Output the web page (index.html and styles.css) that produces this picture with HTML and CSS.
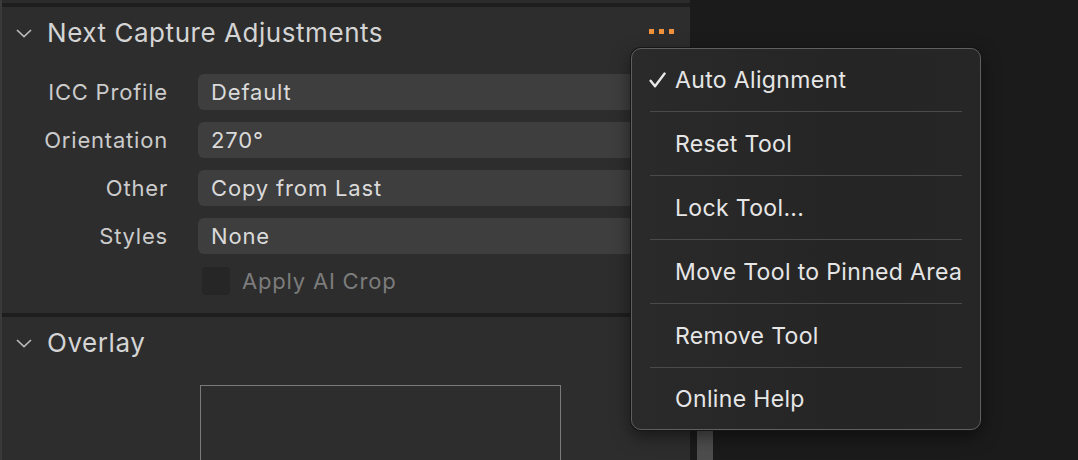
FILE: index.html
```html
<!DOCTYPE html>
<html>
<head>
<meta charset="utf-8">
<link rel="stylesheet" href="styles.css">
</head>
<body>
<div class="app">
  <div class="panel">
    <div class="topstrip"></div>
    <div class="sep"></div>
    <section class="section">
      <div class="header">
        <svg class="chev" width="18" height="10" viewBox="0 0 18 10"><path d="M2 2 L9 8.5 L16 2" fill="none" stroke="#b8b8b8" stroke-width="1.7"/></svg>
        <span class="title">Next Capture Adjustments</span>
        <span class="dots"><i></i><i></i><i></i></span>
      </div>
      <div class="form">
        <div class="label">ICC Profile</div><div class="select">Default</div>
        <div class="label">Orientation</div><div class="select">270°</div>
        <div class="label">Other</div><div class="select">Copy from Last</div>
        <div class="label">Styles</div><div class="select">None</div>
        <div class="label"></div>
        <div class="check"><span class="box"></span><span class="check-text">Apply AI Crop</span></div>
      </div>
    </section>
    <div class="sep"></div>
    <section class="section overlay">
      <div class="header">
        <svg class="chev" width="18" height="10" viewBox="0 0 18 10"><path d="M2 2 L9 8.5 L16 2" fill="none" stroke="#b8b8b8" stroke-width="1.7"/></svg>
        <span class="title">Overlay</span>
      </div>
      <div class="overlay-box"></div>
    </section>
  </div>
  <div class="gutter"><div class="scrollbar"></div></div>
</div>

<div class="menu">
  <div class="item"><svg class="tick" width="17" height="16" viewBox="0 0 17 16"><path d="M1.6 8.8 L6 14.2 L15.6 1.6" fill="none" stroke="#e8e8e8" stroke-width="2.4" stroke-linecap="round" stroke-linejoin="round"/></svg>Auto Alignment</div>
  <div class="msep"></div>
  <div class="item">Reset Tool</div>
  <div class="msep"></div>
  <div class="item">Lock Tool...</div>
  <div class="msep"></div>
  <div class="item">Move Tool to Pinned Area</div>
  <div class="msep"></div>
  <div class="item">Remove Tool</div>
  <div class="msep"></div>
  <div class="item">Online Help</div>
</div>
</body>
</html>
```
FILE: styles.css
```css
html, body {
  margin: 0;
  padding: 0;
  background: #1b1b1b;
  width: 1078px;
  height: 460px;
  overflow: hidden;
  font-family: Inter, "Liberation Sans", sans-serif;
}
.app {
  display: flex;
  height: 460px;
  overflow: hidden;
}
.panel {
  width: 688px;
  height: 460px;
  overflow: hidden;
  background: #2d2d2d;
  border-left: 2px solid #3a3a3a;
  display: flex;
  flex-direction: column;
}
.panel > * {
  flex: none;
}
.topstrip {
  height: 3px;
  background: #2b2b2b;
}
.sep {
  height: 4px;
  background: #1e1e1e;
}
.section {
  display: flex;
  flex-direction: column;
}
.section > * {
  flex: none;
}
.header {
  height: 50px;
  display: flex;
  align-items: center;
  padding-left: 13px;
  padding-right: 16px;
}
.chev {
  margin-right: 14px;
  margin-top: 1px;
}
.title {
  font-size: 26px;
  color: #d4d4d4;
  letter-spacing: 0.55px;
}
.dots {
  margin-left: auto;
  display: flex;
  gap: 5px;
  margin-top: -1px;
}
.dots i {
  width: 5px;
  height: 5px;
  background: #f0913c;
  display: block;
}
.form {
  display: grid;
  grid-template-columns: 166px 1fr;
  column-gap: 30px;
  row-gap: 12px;
  padding: 17px 16px 18px 0;
}
.label {
  text-align: right;
  font-size: 22px;
  letter-spacing: 0.8px;
  color: #cbcbcb;
  line-height: 36px;
}
.select {
  height: 36px;
  background: #3e3e3e;
  border-radius: 6px;
  padding-left: 13px;
  font-size: 22px;
  letter-spacing: 0.85px;
  line-height: 36px;
  color: #dadada;
}
.check {
  display: flex;
  align-items: center;
  height: 28px;
  margin-top: 1px;
  padding-left: 4px;
}
.box {
  width: 28px;
  height: 28px;
  border-radius: 4px;
  background: #262626;
  margin-right: 12px;
}
.check-text {
  font-size: 22px;
  letter-spacing: 0.8px;
  color: #7c7c7c;
}
.overlay-box {
  margin-left: 198px;
  margin-top: 18px;
  width: 359px;
  height: 80px;
  border: 1px solid #7a7a7a;
}
.gutter {
  width: 23px;
  padding-left: 7px;
  display: flex;
  flex-direction: column;
}
.scrollbar {
  margin-top: 360px;
  width: 16px;
  flex: 1;
  background: #4d4d4d;
}
.menu {
  position: absolute;
  left: 631px;
  top: 48px;
  width: 348px;
  background: linear-gradient(90deg, #2a2a2a, #252525 60%, #262626);
  border: 1px solid #5f5f5f;
  border-radius: 10px;
  box-shadow: 0 0 0 1px #161616, 0 6px 18px rgba(0,0,0,0.5);
  display: flex;
  flex-direction: column;
}
.item {
  height: 63px;
  display: flex;
  align-items: center;
  padding-left: 43px;
  font-size: 23px;
  letter-spacing: 0.35px;
  color: #e6e6e6;
  position: relative;
  flex: none;
}
.item:first-child {
  height: 62px;
}
.item:last-child {
  height: 61px;
}
.tick {
  position: absolute;
  left: 17px;
  top: 23px;
}
.msep {
  height: 1px;
  background: #4a4a4a;
  margin: 0 18px;
  flex: none;
}
```
